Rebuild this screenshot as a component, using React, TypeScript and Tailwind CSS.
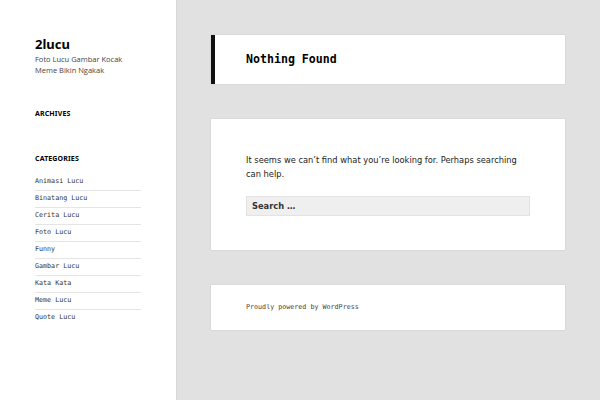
const categories = [
  "Animasi Lucu",
  "Binatang Lucu",
  "Cerita Lucu",
  "Foto Lucu",
  "Funny",
  "Gambar Lucu",
  "Kata Kata",
  "Meme Lucu",
  "Quote Lucu",
];

const mono = "font-['DejaVu_Sans_Mono','Liberation_Mono',monospace]";

export default function App() {
  return (
    <div className="flex h-[400px] w-[600px] overflow-hidden bg-[#e1e1e1] text-[#333]">
      {/* sidebar */}
      <aside className="relative z-10 h-full w-[176px] shrink-0 bg-white px-[35px] pt-[35px] shadow-[0_0_1px_rgba(0,0,0,0.25)]">
        <h1 className="font-['Noto_Sans',sans-serif] text-[13px] font-bold leading-[18px] text-black">2lucu</h1>
        <p className="mt-[1px] font-['Open_Sans',sans-serif] text-[7.5px] leading-[11px] text-[#444]">
          Foto Lucu Gambar Kocak Meme Bikin Ngakak
        </p>

        <h2 className="mt-[33px] font-['Noto_Sans',sans-serif] text-[7px] font-bold uppercase leading-[10px] tracking-[0.02em] text-black">
          Archives
        </h2>

        <h2 className="mt-[35px] font-['Noto_Sans',sans-serif] text-[7px] font-bold uppercase leading-[10px] tracking-[0.02em] text-black">
          Categories
        </h2>
        <ul className={`mt-[10px] w-[106px] ${mono} text-[6.7px] text-[#333]`}>
          {categories.map((c, i) => (
            <li
              key={c}
              className={`h-[17px] leading-[15px] ${i < categories.length - 1 ? "border-b border-[#e5e5e5]" : ""}`}
            >
              {c}
            </li>
          ))}
        </ul>
      </aside>

      {/* main */}
      <main className="flex flex-1 flex-col gap-[35px] pl-[35px] pr-[36px] pt-[35px]">
        <header className="flex h-[49px] shrink-0 items-center border-l-4 border-[#111] bg-white pl-[31px] shadow-[0_0_1px_rgba(0,0,0,0.2)]">
          <h1 className={`${mono} text-[11.6px] font-bold text-black`}>Nothing Found</h1>
        </header>

        <section className="h-[131px] shrink-0 bg-white px-[35px] pt-[34px] shadow-[0_0_1px_rgba(0,0,0,0.2)]">
          <p className="font-['DejaVu_Sans',sans-serif] text-[8.3px] font-medium leading-[14px] text-[#222]">
            It seems we can’t find what you’re looking for. Perhaps searching can help.
          </p>
          <div className="mt-[15px] flex h-[20px] w-[284px] items-center border border-[#e3e3e3] bg-[#efefef] px-[5px] font-['DejaVu_Sans',sans-serif] text-[8.3px] font-semibold text-[#333]">
            Search …
          </div>
        </section>

        <footer className="flex h-[45px] shrink-0 items-center bg-white px-[35px] shadow-[0_0_1px_rgba(0,0,0,0.2)]">
          <p className={`${mono} text-[6.7px] text-[#444]`}>Proudly powered by WordPress</p>
        </footer>
      </main>
    </div>
  );
}
